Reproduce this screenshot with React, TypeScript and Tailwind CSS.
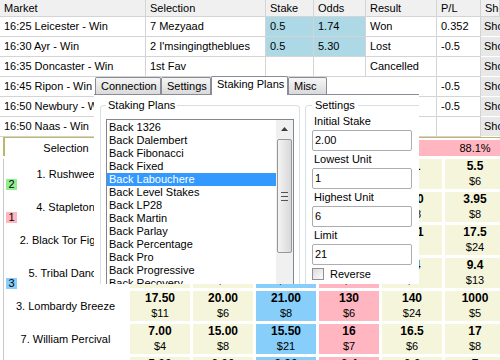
import React from "react";

type Row = { m: string; s: string; st: string; od: string; r: string; pl: string; hi?: boolean };

const rows: Row[] = [
  { m: "16:25 Leicester - Win", s: "7 Mezyaad", st: "0.5", od: "1.74", r: "Won", pl: "0.352", hi: true },
  { m: "16:30 Ayr - Win", s: "2 I'msingingtheblues", st: "0.5", od: "5.30", r: "Lost", pl: "-0.5", hi: true },
  { m: "16:35 Doncaster - Win", s: "1st Fav", st: "", od: "", r: "Cancelled", pl: "" },
  { m: "16:45 Ripon - Win", s: "4 Stapleton", st: "0.5", od: "3.95", r: "Lost", pl: "-0.5" },
  { m: "16:50 Newbury - Win", s: "3 Lombardy Breeze", st: "0.5", od: "21.00", r: "Lost", pl: "-0.5" },
  { m: "16:50 Naas - Win", s: "7 William Percival", st: "", od: "", r: "", pl: "" },
];

type Ladder = { n: string; badge?: string; bc?: string; v: [string, string][] };

const ladder: Ladder[] = [
  { n: "1. Rushwee", badge: "2", bc: "bg-[#90ee90]", v: [["4.00", "$3"], ["4.60", "$8"], ["4.80", "$12"], ["4.90", "$5"], ["5.1", "$9"], ["5.5", "$6"]] },
  { n: "4. Stapleton", badge: "1", bc: "bg-[#ffb6c1]", v: [["3.40", "$5"], ["3.60", "$7"], ["3.70", "$10"], ["3.75", "$4"], ["3.80", "$18"], ["3.95", "$8"]] },
  { n: "2. Black Tor Figure", v: [["14.00", "$6"], ["15.00", "$4"], ["15.50", "$9"], ["16", "$3"], ["16.1", "$4"], ["17.5", "$24"]] },
  { n: "5. Tribal Dance", badge: "3", bc: "bg-[#87cefa]", v: [["7.80", "$2"], ["8.00", "$6"], ["8.20", "$11"], ["8.3", "$5"], ["8.4", "$2"], ["9.4", "$13"]] },
  { n: "3. Lombardy Breeze", v: [["17.50", "$11"], ["20.00", "$6"], ["21.00", "$8"], ["130", "$6"], ["140", "$24"], ["1000", "$5"]] },
  { n: "7. William Percival", v: [["7.00", "$4"], ["15.00", "$8"], ["15.50", "$21"], ["16", "$7"], ["16.5", "$6"], ["17", "$8"]] },
  { n: "6. Silver Lining", v: [["5.00", "$3"], ["6.00", "$5"], ["6.20", "$7"], ["6.4", "$2"], ["6.6", "$4"], ["7", "$9"]] },
];

const cellBg = [
  "bg-[#f5f5dc]",
  "bg-[#f5f5dc]",
  "bg-[#87cefa]",
  "bg-[#ffb6c1]",
  "bg-[#f5f5dc]",
  "bg-[#f5f5dc]",
];

const plans = [
  "Back 1326",
  "Back Dalembert",
  "Back Fibonacci",
  "Back Fixed",
  "Back Labouchere",
  "Back Level Stakes",
  "Back LP28",
  "Back Martin",
  "Back Parlay",
  "Back Percentage",
  "Back Pro",
  "Back Progressive",
  "Back Recovery",
  "Back Staged",
  "Back Tote",
];

const cellBase =
  "h-[20px] border-r border-b border-[#d4d4d4] flex items-center pl-[4px] overflow-hidden whitespace-nowrap";

function TopTable() {
  const heads = ["Market", "Selection", "Stake", "Odds", "Result", "P/L", "Show"];
  return (
    <div className="grid grid-cols-[146px_120px_48px_52px_71px_44px_1fr]">
      {heads.map((h) => (
        <div
          key={h}
          className="h-[17px] border-r border-b border-[#d4d4d4] bg-[#f0f0f0] flex items-center pl-[4px] overflow-hidden whitespace-nowrap"
        >
          {h}
        </div>
      ))}
      {rows.map((r, i) => (
        <React.Fragment key={i}>
          <div className={cellBase}>{r.m}</div>
          <div className={cellBase}>{r.s}</div>
          <div className={`${cellBase} ${r.hi ? "bg-[#add8e6]" : ""}`}>{r.st}</div>
          <div className={`${cellBase} ${r.hi ? "bg-[#add8e6]" : ""}`}>{r.od}</div>
          <div className={cellBase}>{r.r}</div>
          <div className={cellBase}>{r.pl}</div>
          <div className="h-[20px] border-b border-white bg-[#e8e8e8] flex items-center pl-[3px] overflow-hidden whitespace-nowrap">
            Show
          </div>
        </React.Fragment>
      ))}
    </div>
  );
}

function LadderGrid() {
  return (
    <div className="-mt-[1px] ml-[3px] border-t-2 border-[#bdb76b]">
      <div className="border-l-2 border-[#bdb76b] pt-[2px] flex gap-[3px]">
        <div className="w-[122px] shrink-0 h-[16px] flex items-center justify-center">Selection</div>
        <div className="flex-1 h-[16px] bg-[#ffb6c1] flex">
          <div className="w-[315px] shrink-0" />
          <div className="w-[60px] shrink-0 flex items-center justify-center">88.1%</div>
        </div>
      </div>
      <div className="mt-[3px] border-l border-[#c8c8c8] flex flex-col gap-[3px]">
        {ladder.map((l, i) => (
          <div key={i} className="flex gap-[3px] h-[30px]">
            <div className="w-[123px] shrink-0 relative flex items-center justify-center whitespace-nowrap">
              {l.n}
              {l.badge && (
                <div
                  className={`absolute left-[2px] bottom-[-1px] w-[11px] h-[11px] ${l.bc} flex items-center justify-center leading-[11px]`}
                >
                  {l.badge}
                </div>
              )}
            </div>
            {l.v.map((c, j) => (
              <div
                key={j}
                className={`w-[60px] shrink-0 ${cellBg[j]} flex flex-col items-center justify-center`}
              >
                <div className="font-bold text-[12px] leading-[15px]">{c[0]}</div>
                <div className="leading-[15px]">{c[1]}</div>
              </div>
            ))}
          </div>
        ))}
      </div>
    </div>
  );
}

function Tab({ label, w, sel }: { label: string; w: string; sel?: boolean }) {
  if (sel) {
    return (
      <div
        className={`${w} shrink-0 h-[19px] -mb-[1px] bg-white border-t border-l border-r border-[#898c95] rounded-t-[2px] px-[5px] pb-[3px] flex items-center whitespace-nowrap relative`}
      >
        {label}
      </div>
    );
  }
  return (
    <div
      className={`${w} shrink-0 h-[17px] bg-gradient-to-b from-[#f6f6f6] to-[#dadada] border-t border-l border-r border-[#898c95] rounded-t-[2px] px-[5px] flex items-center whitespace-nowrap`}
    >
      {label}
    </div>
  );
}

function TextBox({ value }: { value: string }) {
  return (
    <div className="w-[100px] h-[21px] border border-[#abadb3] rounded-[2px] bg-white flex items-center pl-[2px]">
      {value}
    </div>
  );
}

function Dialog() {
  return (
    <div className="absolute left-[94px] top-[76px] w-[325px] h-[208px] overflow-hidden flex flex-col">
      <div className="h-[19px] border-b border-[#898c95] flex items-end pl-[1px]">
        <Tab label="Connection" w="w-[66px]" />
        <Tab label="Settings" w="w-[50px]" />
        <Tab label="Staking Plans" w="w-[77px]" sel />
        <Tab label="Misc" w="w-[39px]" />
        <div className="flex-1 h-[17px] bg-white" />
      </div>
      <div className="flex-1 bg-white pt-[3px] pl-[6px] flex gap-[5px]">
        <fieldset className="w-[200px] h-[220px] shrink-0 border border-[#d5dfe5] rounded-[3px] px-[5px]">
          <legend className="px-[2px] leading-[14px]">Staking Plans</legend>
          <div className="mt-[7px] h-[200px] border border-[#828790] flex">
            <div className="flex-1 pt-[1px] overflow-hidden">
              {plans.map((p, i) => (
                <div
                  key={p}
                  className={`h-[13px] leading-[13px] pl-[2px] whitespace-nowrap ${
                    i === 4 ? "bg-[#3399ff] text-white" : ""
                  }`}
                >
                  {p}
                </div>
              ))}
            </div>
            <div className="w-[17px] shrink-0 bg-[#f0f0f0] flex flex-col items-center">
              <div className="h-[17px] w-full flex items-center justify-center">
                <svg width="7" height="4" viewBox="0 0 7 4">
                  <path d="M0 4 L3.5 0 L7 4 Z" fill="#3c3c3c" />
                </svg>
              </div>
              <div className="mt-[2px] w-[15px] h-[114px] rounded-[2px] border border-[#979797] bg-gradient-to-r from-[#f4f4f4] to-[#d8d8d8] flex flex-col items-center justify-center gap-[1px]">
                <div className="w-[7px] h-[1px] bg-[#555]" />
                <div className="w-[7px] h-[1px] bg-[#eee]" />
                <div className="w-[7px] h-[1px] bg-[#555]" />
                <div className="w-[7px] h-[1px] bg-[#eee]" />
                <div className="w-[7px] h-[1px] bg-[#555]" />
              </div>
            </div>
          </div>
        </fieldset>
        <fieldset className="w-[140px] h-[220px] shrink-0 border border-[#d5dfe5] rounded-[3px] pl-[6px]">
          <legend className="px-[3px] leading-[14px]">Settings</legend>
          <div className="pt-[1px] flex flex-col">
            <div className="h-[17px] leading-[17px] pl-[2px]">Initial Stake</div>
            <TextBox value="2.00" />
            <div className="h-[17px] leading-[17px] pl-[2px]">Lowest Unit</div>
            <TextBox value="1" />
            <div className="h-[17px] leading-[17px] pl-[2px]">Highest Unit</div>
            <TextBox value="6" />
            <div className="h-[17px] leading-[17px] pl-[2px]">Limit</div>
            <TextBox value="21" />
            <div className="mt-[1px] h-[16px] flex items-center gap-[6px]">
              <div className="w-[12px] h-[12px] border border-[#8e8f8f] bg-gradient-to-br from-[#dcdcdc] to-[#fbfbfb]" />
              <span>Reverse</span>
            </div>
          </div>
        </fieldset>
      </div>
    </div>
  );
}

export default function App() {
  return (
    <div className="relative w-[500px] h-[360px] overflow-hidden bg-white text-black text-[11px] font-['Liberation_Sans',Arial,sans-serif]">
      <TopTable />
      <LadderGrid />
      <Dialog />
    </div>
  );
}
